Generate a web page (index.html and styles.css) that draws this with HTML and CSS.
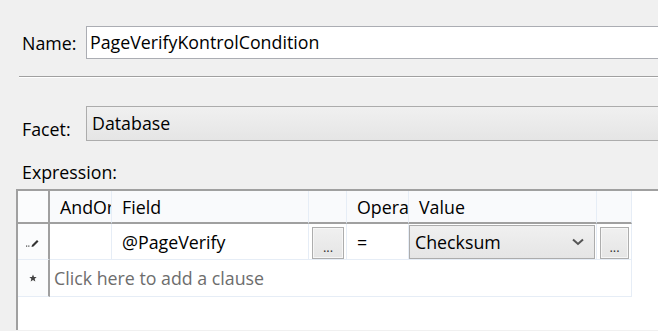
FILE: index.html
```html
<!DOCTYPE html>
<html lang="en">
<head>
    <meta charset="UTF-8">
    <title>Condition</title>
    <link rel="stylesheet" href="styles.css">
</head>
<body>
    <div class="form-row name-row">
        <label class="label">Name:</label>
        <div class="textbox">PageVerifyKontrolCondition</div>
    </div>
    <div class="separator"></div>
    <div class="form-row facet-row">
        <label class="label">Facet:</label>
        <div class="combo">Database</div>
    </div>
    <div class="expr-label">Expression:</div>

    <div class="grid">
        <!-- header row -->
        <div class="cell rowhead head"></div>
        <div class="cell head">AndOr</div>
        <div class="cell head">Field</div>
        <div class="cell head"></div>
        <div class="cell head">Operator</div>
        <div class="cell head">Value</div>
        <div class="cell head last"></div>

        <!-- clause row -->
        <div class="cell rowhead">
            <svg width="14" height="10" viewBox="0 0 14 10">
                <path d="M6 8 L11 3 L12.5 4.5 L7.5 9.5 L5.5 10 Z" fill="#333"/>
                <rect x="0" y="8.5" width="1.2" height="1.2" fill="#444"/>
                <rect x="2.2" y="8.5" width="1.2" height="1.2" fill="#444"/>
            </svg>
        </div>
        <div class="cell"></div>
        <div class="cell">@PageVerify</div>
        <div class="cell btn-cell"><button class="dots">...</button></div>
        <div class="cell">=</div>
        <div class="cell combo-cell">
            <div class="value-combo">
                <span>Checksum</span>
                <svg width="12" height="8" viewBox="0 0 12 8">
                    <path d="M1 1.5 L6 6 L11 1.5" stroke="#555" stroke-width="2" fill="none"/>
                </svg>
            </div>
        </div>
        <div class="cell btn-cell last"><button class="dots">...</button></div>

        <!-- new row -->
        <div class="cell rowhead">
            <svg width="8" height="8" viewBox="0 0 10 10">
                <path d="M5 0.5 L6.3 3.6 L9.6 3.8 L7.1 6 L7.9 9.4 L5 7.6 L2.1 9.4 L2.9 6 L0.4 3.8 L3.7 3.6 Z" fill="#444"/>
            </svg>
        </div>
        <div class="cell new-clause">Click here to add a clause</div>
    </div>
</body>
</html>
```

FILE: styles.css
```css
body {
    font-family: "Open Sans", "Noto Sans", sans-serif;
    font-size: 17.8px;
    color: #000;
    background-color: #f0f0f0;
    margin: 0;
    padding: 0;
    overflow: hidden;
}
.form-row {
    display: flex;
    align-items: center;
    padding-left: 22px;
}
.label {
    width: 64px;
}
.name-row {
    padding-top: 26px;
}
.textbox {
    flex: 1;
    height: 33px;
    line-height: 31px;
    padding-left: 3px;
    margin-right: -4px;
    background-color: #fff;
    border: 1px solid #abadb3;
    box-sizing: border-box;
}
.separator {
    margin: 17px 0 0 19px;
    border-top: 1px solid #a0a0a0;
    border-bottom: 1px solid #fff;
}
.facet-row {
    margin-top: 28px;
}
.facet-row .label {
    padding-top: 10px;
}
.combo {
    flex: 1;
    height: 35px;
    line-height: 33px;
    padding-left: 5px;
    margin-right: -4px;
    background: linear-gradient(#f0f0f0, #e5e5e5);
    border: 1px solid #acacac;
    box-sizing: border-box;
}
.expr-label {
    padding: 21px 0 0 22px;
    height: 48px;
    line-height: 20px;
    box-sizing: border-box;
}
.grid {
    display: grid;
    grid-template-columns: 32px 62px 197px 38px 62px 188px 37px 1fr;
    grid-template-rows: 33px 36px 37px;
    margin-left: 16px;
    height: 139px;
    background-color: #fff;
    border-top: 2px solid #a0a0a0;
    border-left: 2px solid #a0a0a0;
    align-content: start;
}
.cell {
    display: flex;
    align-items: center;
    padding-left: 10px;
    white-space: nowrap;
    overflow: hidden;
    border-right: 1px solid #e6edf6;
    border-bottom: 1px solid #e6edf6;
    box-sizing: border-box;
}
.head {
    background-color: #f9fafc;
    border-bottom: 2px solid #a0a0a0;
}
.cell.last {
    grid-column: 7 / 9;
    margin-right: 26px;
    border-right: 1px solid #e6edf6;
}
.rowhead {
    padding-left: 0;
    justify-content: center;
    border-right: 2px solid #a0a0a0;
    background-color: #fbfcfd;
}
.head.rowhead {
    border-right: 2px solid #a0a0a0;
}
.btn-cell {
    padding: 0 2px 0 3px;
}
.dots {
    width: 34px;
    height: 32px;
    margin-top: 2px;
    padding: 8px 0 0 0;
    font-family: inherit;
    font-size: 13px;
    color: #333;
    background: linear-gradient(#f0f0f0, #e5e5e5);
    border: 1px solid #adadad;
    box-shadow: inset 0 0 0 1px #f6f6f6;
}
.combo-cell {
    padding: 0 1px 0 0;
}
.value-combo {
    flex: 1;
    height: 34px;
    display: flex;
    align-items: center;
    justify-content: space-between;
    padding: 0 10px 0 5px;
    background: linear-gradient(#f0f0f0, #e5e5e5);
    border: 1px solid #acacac;
    box-sizing: border-box;
}
.new-clause {
    grid-column: 2 / 9;
    margin-right: 26px;
    padding-left: 4px;
    color: #6d6d6d;
    border-right: 1px solid #e6edf6;
}
```
